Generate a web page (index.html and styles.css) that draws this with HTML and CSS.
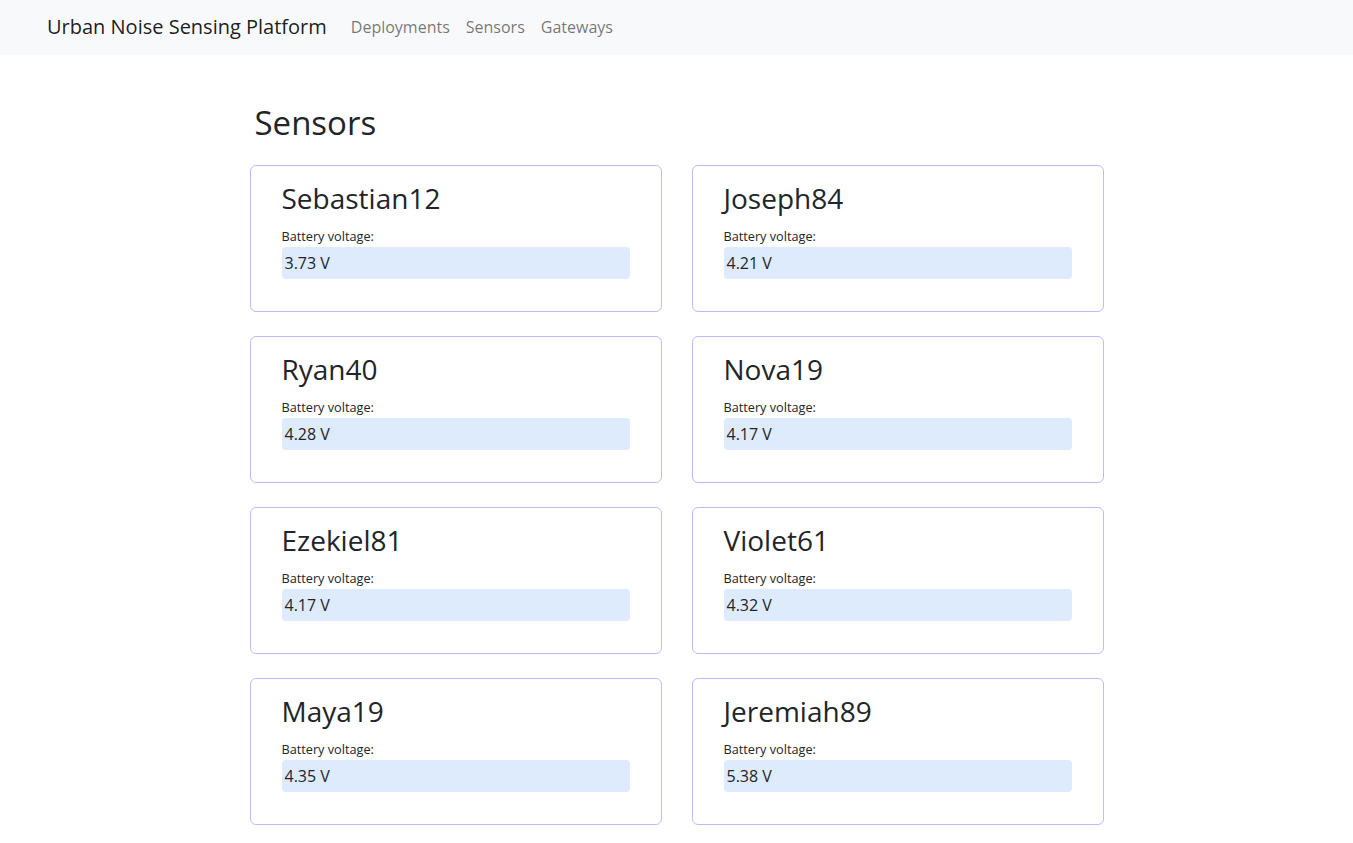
FILE: index.html
```html
<!DOCTYPE html>
<html lang="en">
<head>
<meta charset="utf-8">
<title>Sensors - Urban Noise Sensing Platform</title>
<link rel="stylesheet" href="styles.css">
</head>
<body>
<nav class="navbar">
  <a class="brand" href="#">Urban Noise Sensing Platform</a>
  <ul class="nav-links">
    <li><a href="#">Deployments</a></li>
    <li><a href="#">Sensors</a></li>
    <li><a href="#">Gateways</a></li>
  </ul>
</nav>
<main class="container">
  <h1 class="page-title">Sensors</h1>
  <div class="sensor-grid">
    <div class="card"><h3 class="card-title">Sebastian12</h3><div class="label">Battery voltage:</div><div class="value">3.73 V</div></div>
    <div class="card"><h3 class="card-title">Joseph84</h3><div class="label">Battery voltage:</div><div class="value">4.21 V</div></div>
    <div class="card"><h3 class="card-title">Ryan40</h3><div class="label">Battery voltage:</div><div class="value">4.28 V</div></div>
    <div class="card"><h3 class="card-title">Nova19</h3><div class="label">Battery voltage:</div><div class="value">4.17 V</div></div>
    <div class="card"><h3 class="card-title">Ezekiel81</h3><div class="label">Battery voltage:</div><div class="value">4.17 V</div></div>
    <div class="card"><h3 class="card-title">Violet61</h3><div class="label">Battery voltage:</div><div class="value">4.32 V</div></div>
    <div class="card"><h3 class="card-title">Maya19</h3><div class="label">Battery voltage:</div><div class="value">4.35 V</div></div>
    <div class="card"><h3 class="card-title">Jeremiah89</h3><div class="label">Battery voltage:</div><div class="value">5.38 V</div></div>
  </div>
</main>
</body>
</html>
```
FILE: styles.css
```css
* { box-sizing: border-box; }
html, body { margin: 0; padding: 0; }
body {
  font-family: "Open Sans", "Noto Sans", sans-serif;
  font-size: 16px;
  line-height: 1.5;
  color: #212529;
  background: #fff;
}
a { text-decoration: none; }

.navbar {
  display: flex;
  align-items: center;
  height: 55px;
  padding: 0 0 2px 47px;
  background: #f8f9fa;
}
.brand {
  font-size: 20px;
  color: rgba(0, 0, 0, 0.9);
  margin-right: 16px;
  line-height: 30px;
}
.nav-links {
  display: flex;
  list-style: none;
  margin: 0;
  padding: 0;
}
.nav-links a {
  display: block;
  padding: 8px 8px;
  color: rgba(0, 0, 0, 0.55);
  font-size: 16px;
}

.container {
  width: 854px;
  margin: 0 auto;
  padding-bottom: 40px;
}
.page-title {
  font-size: 33px;
  font-weight: 400;
  line-height: 1.2;
  margin: 48px 0 22px 5px;
}
.sensor-grid {
  display: grid;
  grid-template-columns: 1fr 1fr;
  column-gap: 30px;
  row-gap: 24px;
}
.card {
  border: 1px solid #bcbcf7;
  border-radius: 6px;
  padding: 16px 31px 32px;
  background: #fff;
}
.card-title {
  font-size: 28px;
  font-weight: 400;
  line-height: 33px;
  margin: 0 0 12px;
}
.label {
  font-size: 12.7px;
  line-height: 18px;
  margin-bottom: 2px;
}
.value {
  background: #ddebfc;
  border-radius: 4px;
  height: 32px;
  line-height: 32px;
  padding-left: 3px;
  font-size: 16px;
}
```
